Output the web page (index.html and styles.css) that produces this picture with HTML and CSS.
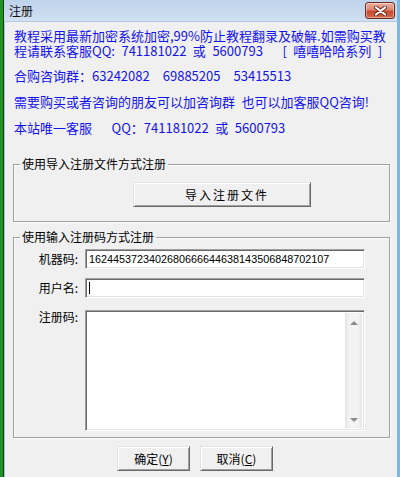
FILE: index.html
```html
<!DOCTYPE html>
<html lang="zh-CN">
<head>
<meta charset="utf-8">
<title>注册</title>
<link rel="stylesheet" href="styles.css">
</head>
<body>
<div class="desk">
  <div class="window">
    <div class="titlebar">
      <span class="title">注册</span>
      <span class="close">
        <svg width="13" height="10" viewBox="0 0 13 10">
          <path d="M2 1.5 L11 8.5 M11 1.5 L2 8.5" stroke="#6b2a20" stroke-width="4" stroke-linecap="round" fill="none"/>
          <path d="M2 1.5 L11 8.5 M11 1.5 L2 8.5" stroke="#ffffff" stroke-width="2.2" stroke-linecap="round" fill="none"/>
        </svg>
      </span>
    </div>
    <div class="client">
      <div class="notice">
        <p class="lead"><span class="ln">教程采用最新加密系统加密,99%防止教程翻录及破解.如需购买教</span><span class="ln">程请联系客服QQ: 741181022 或 5600793   [ 嘻嘻哈哈系列 ]</span></p>
        <p class="second">合购咨询群：63242082  69885205  53415513</p>
        <p>需要购买或者咨询的朋友可以加咨询群 也可以加客服QQ咨询!</p>
        <p>本站唯一客服   QQ：741181022 或 5600793</p>
      </div>

      <fieldset class="group group-file">
        <legend>使用导入注册文件方式注册</legend>
        <div class="btn btn-import">导入注册文件</div>
      </fieldset>

      <fieldset class="group group-code">
        <legend>使用输入注册码方式注册</legend>
        <div class="row">
          <span class="label">机器码:</span>
          <div class="field machine">1624453723402680666644638143506848702107</div>
        </div>
        <div class="row">
          <span class="label">用户名:</span>
          <div class="field"><span class="caret"></span></div>
        </div>
        <div class="row row-memo">
          <span class="label">注册码:</span>
          <div class="field memo">
            <div class="memo-text"></div>
            <div class="vscroll"><span class="arrow up"></span><span class="arrow down"></span></div>
          </div>
        </div>
      </fieldset>

      <div class="actions">
        <div class="btn btn-small">确定(<u>Y</u>)</div>
        <div class="btn btn-small">取消(<u>C</u>)</div>
      </div>
    </div>
  </div>
</div>
</body>
</html>
```

FILE: styles.css
```css
* { box-sizing: border-box; }

html, body {
  margin: 0;
  width: 400px;
  height: 477px;
  overflow: hidden;
}

body {
  background: #1d961d;
  font-family: "Noto Sans CJK SC", "Noto Sans", sans-serif;
  color: #000;
}

.desk {
  display: flex;
  height: 477px;
  padding-left: 3px;
}

.window {
  width: 397px;
  height: 477px;
  display: flex;
  flex-direction: column;
  border-left: 1px solid #24341f;
  border-right: 3px solid #7cb8e4;
  background: #f0f0f0;
}

.titlebar {
  height: 22px;
  flex: none;
  display: flex;
  align-items: center;
  padding-left: 5px;
  background: linear-gradient(to bottom, #bed3ec 0%, #c9daef 60%, #d2e1f2 100%);
  border-bottom: 1px solid #b4c9e2;
}

.title {
  font-size: 12px;
  line-height: 14px;
  color: #111;
}

.close {
  margin-left: auto;
  margin-right: 2px;
  width: 30px;
  height: 17px;
  display: flex;
  align-items: center;
  justify-content: center;
  border: 1px solid #6d2a1e;
  border-radius: 3px;
  background: linear-gradient(to bottom, #eab1a2 0%, #dc8570 45%, #c84a30 55%, #d0674b 100%);
  box-shadow: inset 0 0 0 1px rgba(255, 255, 255, 0.4);
}

.client {
  flex: 1;
  border-left: 1px solid #aac5e6;
  padding-top: 6px;
}

.notice {
  padding-left: 9px;
}

.notice p {
  margin: 0;
  font-size: 13px;
  line-height: 26px;
  color: #1212ee;
  white-space: pre;
  word-spacing: 3.6px;
}

.notice .lead {
  line-height: 15px;
}

.notice .ln {
  display: block;
  height: 15px;
}

.notice .second {
  margin-top: 5px;
}

.group {
  margin: 16px 0 0 8px;
  width: 377px;
  padding: 0;
  border: 1px solid #a0a0a0;
  box-shadow: inset 1px 1px 0 #ffffff, 1px 1px 0 #ffffff;
  min-inline-size: 0;
}

.group legend {
  margin-left: 6px;
  padding: 0 2px;
  font-size: 12px;
  line-height: 14px;
  background: #f0f0f0;
}

.group-code {
  margin-top: 8px;
  padding-bottom: 6px;
}

.btn {
  display: flex;
  align-items: center;
  justify-content: center;
  height: 25px;
  font-size: 12px;
  line-height: 14px;
  background: #f0f0f0;
  border: 1px solid;
  border-color: #e3e3e3 #696969 #696969 #e3e3e3;
  box-shadow: inset 1px 1px 0 #ffffff, inset -1px -1px 0 #a0a0a0;
}

.btn-import {
  width: 178px;
  margin: 11px 0 14px 119px;
  letter-spacing: 2px;
  padding-left: 10px;
}

.row {
  display: flex;
  align-items: center;
  gap: 7px;
}

.row:first-of-type {
  margin-top: 5px;
}

.row + .row {
  margin-top: 9px;
}

.row.row-memo {
  margin-top: 12px;
  align-items: flex-start;
}

.label {
  width: 64px;
  text-align: right;
  font-size: 12px;
  line-height: 14px;
}

.field {
  width: 280px;
  height: 20px;
  background: #ffffff;
  border: 1px solid;
  border-color: #a0a0a0 #ffffff #ffffff #a0a0a0;
  box-shadow: inset 1px 1px 0 #696969, inset -1px -1px 0 #e3e3e3;
  display: flex;
  align-items: center;
  padding-left: 3px;
}

.machine {
  font-family: "Liberation Sans", Arial, sans-serif;
  font-size: 10.8px;
  line-height: 12px;
  color: #000;
}

.caret {
  width: 1px;
  height: 12px;
  background: #000;
}

.memo {
  height: 121px;
  padding: 2px;
  align-items: stretch;
}

.memo-text {
  flex: 1;
}

.vscroll {
  width: 17px;
  display: flex;
  flex-direction: column;
  justify-content: space-between;
  align-items: center;
  padding: 8px 0 6px;
  background: linear-gradient(to right, #e4e4e4 0%, #f3f3f3 25%, #f3f3f3 75%, #e6e6e6 100%);
}

.arrow {
  width: 0;
  height: 0;
  border-left: 4px solid transparent;
  border-right: 4px solid transparent;
}

.arrow.up {
  border-bottom: 4px solid #8c8c8c;
}

.arrow.down {
  border-top: 4px solid #8c8c8c;
}

.actions {
  display: flex;
  gap: 10px;
  padding-left: 112px;
  margin-top: 8px;
}

.btn-small {
  width: 73px;
}

.btn-small u {
  text-underline-offset: 1px;
}
```
